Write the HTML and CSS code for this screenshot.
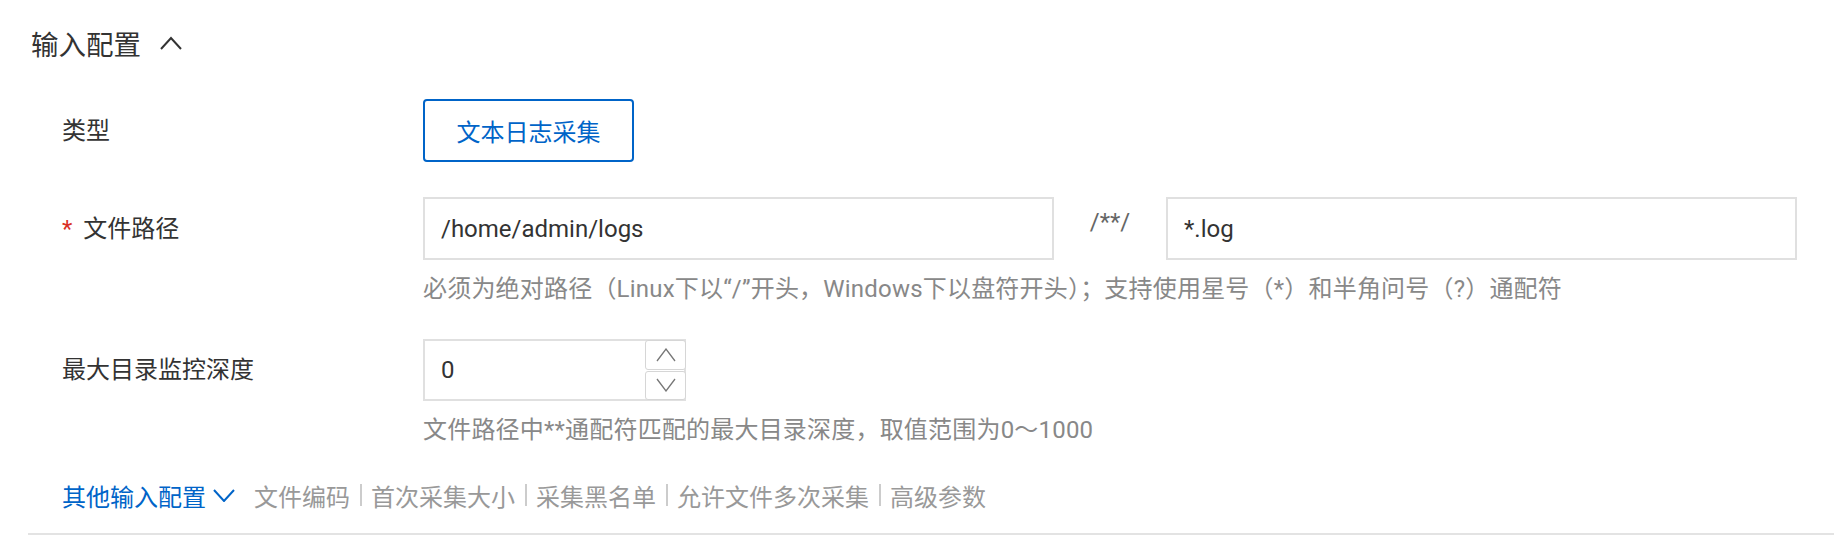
FILE: index.html
```html
<!DOCTYPE html>
<html>
<head>
  <link rel="stylesheet" href="styles.css">
</head>
<body>
  <!-- 输入配置 -->
  <div class="panel">
    <div class="panel-head">
      <span class="panel-title">输入配置</span>
      <svg class="caret" width="22" height="14" viewBox="0 0 22 14"><polyline points="1,13 11,2 21,13" /></svg>
    </div>

    <div class="form">
      <!-- 类型 -->
      <div class="form-item">
        <div class="label">类型</div>
        <div class="control">
          <button class="type-btn">文本日志采集</button>
        </div>
      </div>

      <!-- 文件路径 -->
      <div class="form-item">
        <div class="label"><span class="required">*</span>文件路径</div>
        <div class="control path-row">
          <input class="text-input" type="text" value="/home/admin/logs">
          <span class="path-sep">/**/</span>
          <input class="text-input" type="text" value="*.log">
        </div>
        <div class="help">必须为绝对路径（Linux下以“/”开头，Windows下以盘符开头）；支持使用星号（*）和半角问号（?）通配符</div>
      </div>

      <!-- 最大目录监控深度 -->
      <div class="form-item">
        <div class="label">最大目录监控深度</div>
        <div class="control">
          <div class="number-box">
            <input class="number-input" type="text" value="0">
            <div class="spinner">
              <button class="spin-btn"><svg width="20" height="14" viewBox="0 0 20 14"><polyline points="1,13 10,1 19,13" /></svg></button>
              <button class="spin-btn"><svg width="20" height="14" viewBox="0 0 20 14"><polyline points="1,1 10,13 19,1" /></svg></button>
            </div>
          </div>
        </div>
        <div class="help">文件路径中**通配符匹配的最大目录深度，取值范围为0～1000</div>
      </div>
    </div>

    <!-- 其他输入配置 -->
    <div class="more">
      <a class="more-link">其他输入配置<svg class="more-caret" width="22" height="13" viewBox="0 0 22 13"><polyline points="1,1 11,12 21,1" /></svg></a>
      <span class="more-item">文件编码</span>
      <span class="more-sep"></span>
      <span class="more-item">首次采集大小</span>
      <span class="more-sep"></span>
      <span class="more-item">采集黑名单</span>
      <span class="more-sep"></span>
      <span class="more-item">允许文件多次采集</span>
      <span class="more-sep"></span>
      <span class="more-item">高级参数</span>
    </div>

    <div class="divider"></div>
  </div>
</body>
</html>
```

FILE: styles.css
```css
/* 页面 */
body {
  margin: 0;
  background: #fff;
  color: #333;
  font-family: "Roboto", "Noto Sans CJK SC", sans-serif;
  font-size: 24px;
}

.panel {
  padding: 23px 0 0 28px;
}

/* 标题 */
.panel-head {
  display: flex;
  align-items: center;
  height: 40px;
  padding-left: 3px;
}

.panel-title {
  font-size: 27.5px;
  color: #333;
}

.caret {
  margin-left: 19px;
  fill: none;
  stroke: #333;
  stroke-width: 2;
}

/* 表单 */
.form {
  margin-top: 36px;
  padding: 0 37px 0 34px;
}

.form-item {
  display: grid;
  grid-template-columns: 361px 1fr;
  margin-bottom: 35px;
}

.label {
  align-self: center;
  line-height: 30px;
  color: #333;
}

.required {
  color: #d93026;
  margin-right: 11px;
}

.help {
  grid-column: 2;
  margin-top: 14px;
  line-height: 30px;
  letter-spacing: 0.2px;
  color: #888;
}

.type-btn {
  height: 63px;
  width: 211px;
  padding: 0;
  border: 2px solid #0064c8;
  border-radius: 4px;
  background: #fff;
  color: #0064c8;
  font: inherit;
}

/* 路径输入 */
.path-row {
  display: flex;
}

.text-input {
  flex: 1;
  min-width: 0;
  height: 63px;
  box-sizing: border-box;
  border: 2px solid #e0e0e0;
  padding: 0 16px;
  font: inherit;
  color: #333;
  outline: none;
}

.path-sep {
  width: 112px;
  text-align: center;
  padding-top: 10px;
  line-height: 30px;
  color: #666;
}

/* 数字输入 */
.number-box {
  display: flex;
  width: 263px;
  height: 62px;
  box-sizing: border-box;
  border: 2px solid #e0e0e0;
}

.number-input {
  flex: 1;
  min-width: 0;
  border: none;
  padding: 0 16px;
  font: inherit;
  color: #333;
  outline: none;
}

.spinner {
  display: flex;
  flex-direction: column;
  gap: 1px;
  width: 41px;
  margin: -1px -2px -1px 0;
}

.spin-btn {
  flex: 1;
  display: flex;
  justify-content: center;
  align-items: center;
  padding: 0;
  border: 1px solid #d6d6d6;
  border-radius: 3px;
  background: #fff;
}

.spin-btn svg {
  fill: none;
  stroke: #777;
  stroke-width: 1.3;
}

/* 其他输入配置 */
.more {
  display: flex;
  align-items: center;
  height: 30px;
  margin-top: 2px;
  padding-left: 34px;
}

.more-link {
  display: flex;
  align-items: center;
  margin-right: 19px;
  color: #0064c8;
}

.more-caret {
  margin-left: 7px;
  fill: none;
  stroke: #0064c8;
  stroke-width: 2;
}

.more-item {
  color: #999;
}

.more-sep {
  width: 2px;
  height: 22px;
  margin: 0 9.5px;
  background: #ccc;
}

.divider {
  height: 2px;
  margin-top: 23px;
  background: #e3e3e3;
}
```
